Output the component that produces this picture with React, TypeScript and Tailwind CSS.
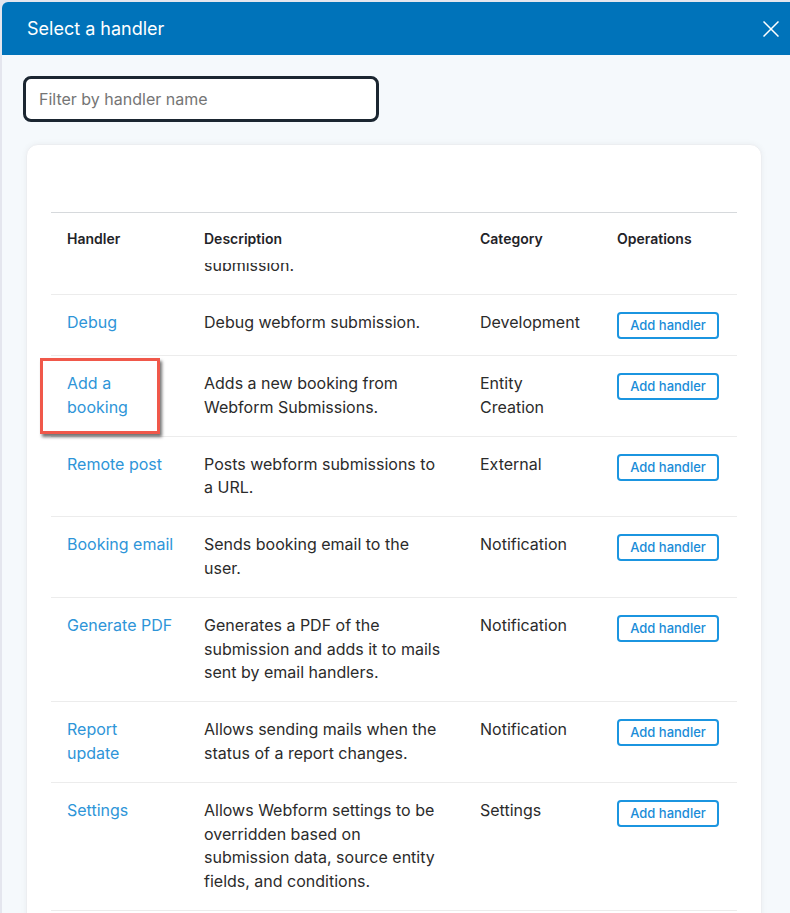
import React from "react"

// Handler rows shown in the dialog
const handlers = [
  { name: "Debug", description: "Debug webform submission.", category: "Development" },
  { name: "Add a booking", description: "Adds a new booking from Webform Submissions.", category: "Entity Creation" },
  { name: "Remote post", description: "Posts webform submissions to a URL.", category: "External" },
  { name: "Booking email", description: "Sends booking email to the user.", category: "Notification" },
  {
    name: "Generate PDF",
    description: "Generates a PDF of the submission and adds it to mails sent by email handlers.",
    category: "Notification",
  },
  { name: "Report update", description: "Allows sending mails when the status of a report changes.", category: "Notification" },
  {
    name: "Settings",
    description: "Allows Webform settings to be overridden based on submission data, source entity fields, and conditions.",
    category: "Settings",
  },
]

const cols = "grid grid-cols-[137px_276px_137px_137px]"

export default function App() {
  return (
    <div
      className="relative h-[913px] w-full overflow-hidden bg-[#e4e6ee] pl-[2px] pt-[2px]"
      style={{ fontFamily: "Inter, 'Noto Sans', sans-serif" }}
    >
      <div className="h-full w-[800px] overflow-hidden rounded-tl-md bg-[#f5f9fc]">
        {/* Dialog header */}
        <div className="flex h-[53px] w-[788px] items-center bg-[#0073ba] pl-[25px] pr-[11px]">
          <h1 className="flex-1 text-[18px] text-white">Select a handler</h1>
          <button className="text-white">
            <svg width="16" height="16" viewBox="0 0 16 16" fill="none" stroke="currentColor" strokeWidth="1.5">
              <path d="M0.5 0.5L15.5 15.5M15.5 0.5L0.5 15.5" />
            </svg>
          </button>
        </div>

        <div className="pl-[21px] pt-[21px]">
          <input
            type="text"
            placeholder="Filter by handler name"
            className="h-[46px] w-[356px] rounded-lg border-[3px] border-[#1b2631] bg-white px-[13px] text-[16px] text-[#222] placeholder:text-[#757575] outline-none"
          />

          {/* Results card */}
          <div className="ml-[3px] mt-[22px] w-[736px] rounded-xl border border-[#eceef1] bg-white px-6 pt-[67px] pb-10 shadow-[0_0_6px_rgba(0,0,0,0.05)]">
            <div className="border-t border-[#d6d9dc]">
              <div className={`${cols} pb-[14px] pt-[16px] text-[14px] font-semibold leading-5 text-[#1f2328]`}>
                <div className="pl-4">Handler</div>
                <div className="pl-4">Description</div>
                <div className="pl-4">Category</div>
                <div className="pl-4">Operations</div>
              </div>

              <div className="h-[32px] overflow-hidden border-b border-[#ececec]">
                <div className={`${cols} -mt-[10px] text-[16px] leading-6 text-[#2b2b2b]`}>
                  <div />
                  <div className="pl-4">submission.</div>
                </div>
              </div>

              {handlers.map((h) => (
                <div key={h.name} className={`${cols} border-b border-[#ececec] text-[16px] leading-[23.8px] text-[#2b2b2b]`}>
                  <div className="py-4 pl-4 pr-[14px]">
                    <a href="#" className="text-[#2e95d8]">
                      {h.name}
                    </a>
                  </div>
                  <div className="py-4 pl-4 pr-[20px]">{h.description}</div>
                  <div className="py-4 pl-4 pr-[26px]">{h.category}</div>
                  <div className="pl-4 pb-4 pt-[17px]">
                    <button className="h-[27px] w-[102px] rounded border-2 border-[#1b95e0] text-[13px] font-medium leading-none text-[#1a8cd8]">
                      Add handler
                    </button>
                  </div>
                </div>
              ))}
            </div>
          </div>
        </div>
      </div>

      {/* red highlight annotation */}
      <div className="absolute left-[40px] top-[358px] h-[76px] w-[120px] border-[3px] border-[#f0584a] shadow-[2px_3px_3px_rgba(0,0,0,0.55)]" />
    </div>
  )
}
